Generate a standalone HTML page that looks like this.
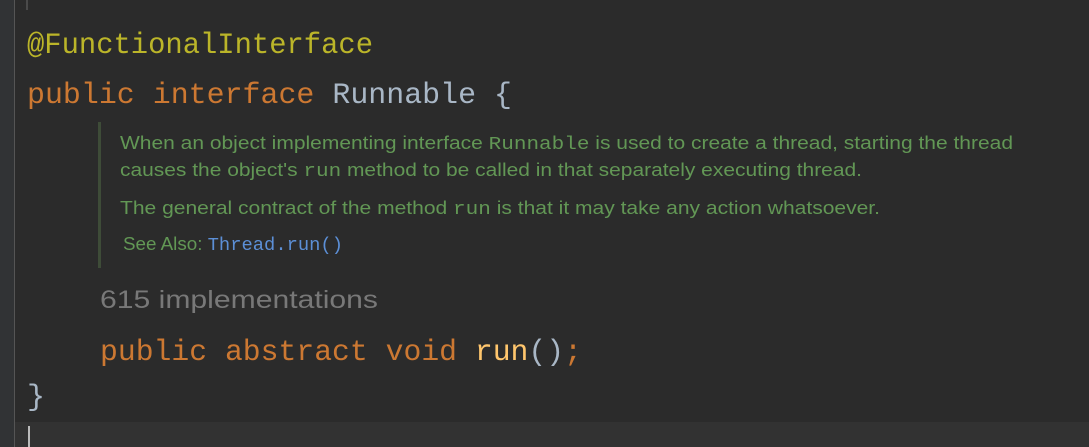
<!DOCTYPE html>
<html><head><style>
html,body{margin:0;padding:0;background:#2b2b2b;width:1089px;height:447px;overflow:hidden}
svg{display:block}
</style></head><body>
<svg width="1089" height="447" xmlns="http://www.w3.org/2000/svg">
<rect width="1089" height="447" fill="#2b2b2b"/>
<rect x="0" y="0" width="14" height="447" fill="#313335"/>
<rect x="14" y="0" width="1" height="447" fill="#555555"/>
<rect x="15" y="422" width="1074" height="25" fill="#323232"/>
<rect x="26" y="0" width="2" height="10" fill="#4a4a4a"/>
<rect x="28" y="426" width="2" height="21" fill="#bbbbbb"/>
<rect x="98" y="122" width="3" height="146" fill="#3e4c38"/>
<g font-family="'Liberation Mono', monospace" font-size="30">
<text x="27" y="53" fill="#bbb529" textLength="346" lengthAdjust="spacingAndGlyphs">@FunctionalInterface</text>
<text x="27" y="103" textLength="485" lengthAdjust="spacingAndGlyphs"><tspan fill="#cc7832">public interface </tspan><tspan fill="#a9b7c6">Runnable {</tspan></text>
<text x="100" y="360" textLength="482" lengthAdjust="spacingAndGlyphs"><tspan fill="#cc7832">public abstract void </tspan><tspan fill="#ffc66d">run</tspan><tspan fill="#a9b7c6">()</tspan><tspan fill="#cc7832">;</tspan></text>
<text x="27" y="405" fill="#a9b7c6">}</text>
</g>
<g font-family="'Liberation Sans', sans-serif" font-size="18" fill="#629755">
<text x="120" y="149" textLength="893" lengthAdjust="spacingAndGlyphs">When an object implementing interface <tspan font-family="'Liberation Mono', monospace">Runnable</tspan> is used to create a thread, starting the thread</text>
<text x="120" y="176" textLength="742" lengthAdjust="spacingAndGlyphs">causes the object's <tspan font-family="'Liberation Mono', monospace">run</tspan> method to be called in that separately executing thread.</text>
<text x="120" y="214" textLength="760" lengthAdjust="spacingAndGlyphs">The general contract of the method <tspan font-family="'Liberation Mono', monospace">run</tspan> is that it may take any action whatsoever.</text>
<text x="123" y="250" textLength="220" lengthAdjust="spacingAndGlyphs">See Also: <tspan fill="#5c8fd6" font-family="'Liberation Mono', monospace">Thread.run()</tspan></text>
</g>
<text x="100" y="308" font-family="'Liberation Sans', sans-serif" font-size="25" fill="#787878" textLength="278" lengthAdjust="spacingAndGlyphs">615 implementations</text>
</svg>
</body></html>
